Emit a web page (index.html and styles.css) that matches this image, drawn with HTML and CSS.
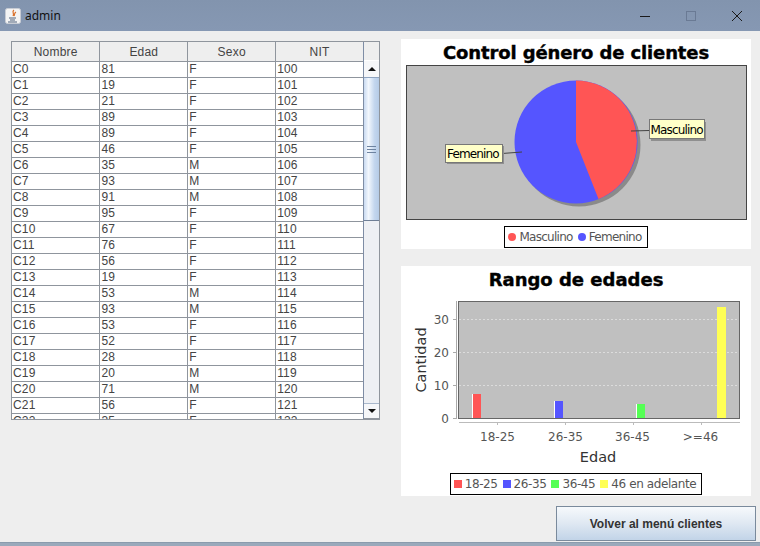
FILE: index.html
```html
<!DOCTYPE html>
<html lang="es">
<head>
    <meta charset="UTF-8">
    <meta name="viewport" content="width=device-width, initial-scale=1.0">
    <title>admin</title>
    <link rel="stylesheet" href="styles.css">
</head>
<body>
    <div class="titlebar">
        <svg class="app-icon" width="16" height="16" viewBox="0 0 16 16">
            <rect x="0.5" y="0.5" width="15" height="15" rx="2" fill="#f4f4f4" stroke="#c8ccd4"/>
            <path d="M9 2c-3 2 1 3-1 6M11 4c-2 1-1 2-2 4" fill="none" stroke="#d9702a" stroke-width="1.2"/>
            <path d="M4 10h7M5 12h5M3 14h9" stroke="#51637c" stroke-width="1"/>
        </svg>
        <span class="title-text">admin</span>
        <div class="win-btns">
            <svg width="12" height="12" viewBox="0 0 12 12"><path d="M1 6.5h10" stroke="#1a1a1a" stroke-width="1"/></svg>
            <svg width="12" height="12" viewBox="0 0 12 12"><rect x="1.5" y="1.5" width="9" height="9" fill="none" stroke="#6a7a94"/></svg>
            <svg width="12" height="12" viewBox="0 0 12 12"><path d="M1 1l10 10M11 1L1 11" stroke="#1a1a1a" stroke-width="1"/></svg>
        </div>
    </div>

    <div class="content">
        <div class="table-pane">
            <div class="table-scroll">
                <table class="data">
                    <thead>
                        <tr><th>Nombre</th><th>Edad</th><th>Sexo</th><th>NIT</th></tr>
                    </thead>
                    <tbody>
                        <tr><td>C0</td><td>81</td><td>F</td><td>100</td></tr>
                        <tr><td>C1</td><td>19</td><td>F</td><td>101</td></tr>
                        <tr><td>C2</td><td>21</td><td>F</td><td>102</td></tr>
                        <tr><td>C3</td><td>89</td><td>F</td><td>103</td></tr>
                        <tr><td>C4</td><td>89</td><td>F</td><td>104</td></tr>
                        <tr><td>C5</td><td>46</td><td>F</td><td>105</td></tr>
                        <tr><td>C6</td><td>35</td><td>M</td><td>106</td></tr>
                        <tr><td>C7</td><td>93</td><td>M</td><td>107</td></tr>
                        <tr><td>C8</td><td>91</td><td>M</td><td>108</td></tr>
                        <tr><td>C9</td><td>95</td><td>F</td><td>109</td></tr>
                        <tr><td>C10</td><td>67</td><td>F</td><td>110</td></tr>
                        <tr><td>C11</td><td>76</td><td>F</td><td>111</td></tr>
                        <tr><td>C12</td><td>56</td><td>F</td><td>112</td></tr>
                        <tr><td>C13</td><td>19</td><td>F</td><td>113</td></tr>
                        <tr><td>C14</td><td>53</td><td>M</td><td>114</td></tr>
                        <tr><td>C15</td><td>93</td><td>M</td><td>115</td></tr>
                        <tr><td>C16</td><td>53</td><td>F</td><td>116</td></tr>
                        <tr><td>C17</td><td>52</td><td>F</td><td>117</td></tr>
                        <tr><td>C18</td><td>28</td><td>F</td><td>118</td></tr>
                        <tr><td>C19</td><td>20</td><td>M</td><td>119</td></tr>
                        <tr><td>C20</td><td>71</td><td>M</td><td>120</td></tr>
                        <tr><td>C21</td><td>56</td><td>F</td><td>121</td></tr>
                        <tr><td>C22</td><td>35</td><td>F</td><td>122</td></tr>
                    </tbody>
                </table>
            </div>
            <div class="scrollbar">
                <div class="corner"></div>
                <div class="arrow-btn"><span class="tri-up"></span></div>
                <div class="track">
                    <div class="thumb"><span class="grip"></span></div>
                </div>
                <div class="arrow-btn arrow-btn-down"><span class="tri-down"></span></div>
            </div>
        </div>

        <div class="right-col">
            <div class="chart chart-pie">
                <h2 class="chart-title">Control género de clientes</h2>
                <svg class="pie-plot" width="341" height="155" viewBox="0 0 341 155">
                    <rect x="0.5" y="0.5" width="340" height="154" fill="#c0c0c0" stroke="#444"/>
                    <circle cx="173" cy="80" r="61.5" fill="#8a8a8a"/>
                    <circle cx="170" cy="77" r="61.5" fill="#5555ff"/>
                    <path d="M170 77V15.500A61.500 61.500 0 0 1 192.500 134Z" fill="#ff5555"/>
                    <path d="M243 65.500L225 66" stroke="#444" fill="none"/>
                    <path d="M96 88.500L116 87" stroke="#444" fill="none"/>
                    <rect x="245" y="57" width="55" height="19" fill="#8f8f8f"/>
                    <rect x="243.500" y="54.500" width="55" height="19" fill="#ffffc8" stroke="#777"/>
                    <text x="244.500" y="69" class="pie-label">Masculino</text>
                    <rect x="41" y="81" width="57" height="18" fill="#8f8f8f"/>
                    <rect x="39.500" y="79.500" width="57" height="18" fill="#ffffc8" stroke="#777"/>
                    <text x="41" y="93" class="pie-label">Femenino</text>
                </svg>
                <div class="legend legend-pie">
                    <span class="legend-item"><i class="dot red"></i>Masculino</span>
                    <span class="legend-item"><i class="dot blue"></i>Femenino</span>
                </div>
            </div>

            <div class="chart chart-bars">
                <h2 class="chart-title">Rango de edades</h2>
                <svg class="bar-plot" width="350" height="173" viewBox="0 0 350 173">
                    <rect x="57.500" y="0.500" width="281" height="117" fill="#c0c0c0" stroke="#666"/>
                    <path d="M58 18.500h280M58 51.500h280M58 84.500h280" stroke="#dcdcdc" stroke-dasharray="2 2"/>
                    <rect x="71" y="93" width="9" height="24" fill="#ff5555"/>
                    <path d="M71.500 93v24" stroke="#fff"/>
                    <rect x="153" y="100" width="9" height="17" fill="#5555ff"/>
                    <path d="M153.500 100v17" stroke="#fff"/>
                    <rect x="235" y="103" width="9" height="14" fill="#55ff55"/>
                    <path d="M235.500 103v14" stroke="#fff"/>
                    <rect x="316" y="6" width="9" height="111" fill="#ffff55"/>
                    <path d="M55.500 0v118M52 117.500h4M52 84.500h4M52 51.500h4M52 18.500h4" stroke="#aaa"/>
                    <path d="M58 121.500h281M96.500 121v3M164.500 121v3M232.500 121v3M300.500 121v3" stroke="#bbb"/>
                    <text class="tick" x="48" y="122" text-anchor="end">0</text>
                    <text class="tick" x="48" y="89" text-anchor="end">10</text>
                    <text class="tick" x="48" y="56" text-anchor="end">20</text>
                    <text class="tick" x="48" y="23" text-anchor="end">30</text>
                    <text class="tick" x="96.500" y="140" text-anchor="middle">18-25</text>
                    <text class="tick" x="164.500" y="140" text-anchor="middle">26-35</text>
                    <text class="tick" x="231.500" y="140" text-anchor="middle">36-45</text>
                    <text class="tick" x="299.500" y="140" text-anchor="middle">&gt;=46</text>
                    <text class="axis-name" x="197" y="161" text-anchor="middle">Edad</text>
                    <text class="axis-name" transform="translate(25 59) rotate(-90)" text-anchor="middle">Cantidad</text>
                </svg>
                <div class="legend">
                    <span class="legend-item"><i class="box red"></i>18-25</span>
                    <span class="legend-item"><i class="box blue"></i>26-35</span>
                    <span class="legend-item"><i class="box green"></i>36-45</span>
                    <span class="legend-item"><i class="box yellow"></i>46 en adelante</span>
                </div>
            </div>

            <div class="actions">
                <button class="back-btn">Volver al menú clientes</button>
            </div>
        </div>
    </div>
    <div class="bottom-edge"></div>
</body>
</html>
```

FILE: styles.css
```css
html, body {
    height: 100%;
}
body {
    margin: 0;
    display: flex;
    flex-direction: column;
    background-color: #eeeeee;
    font-family: "Liberation Sans", Arial, sans-serif;
    overflow: hidden;
}
.titlebar {
    flex: none;
    height: 31px;
    display: flex;
    align-items: center;
    padding-left: 5px;
    background: linear-gradient(to bottom, #8294ae, #8698b3);
}
.app-icon {
    margin-right: 4px;
}
.title-text {
    font-family: "Noto Sans", sans-serif;
    font-size: 12px;
    color: #111;
}
.win-btns {
    margin-left: auto;
    display: flex;
    gap: 34px;
    padding-right: 17px;
}
.content {
    flex: 1;
    display: flex;
    align-items: flex-start;
    padding-left: 11px;
    min-height: 0;
}
.table-pane {
    width: 369px;
    height: 379px;
    margin-top: 10px;
    box-sizing: border-box;
    display: flex;
    border: 1px solid #8f959d;
    background-color: #fff;
}
.table-scroll {
    width: 352px;
    height: 377px;
    overflow: hidden;
}
.data {
    width: 352px;
    table-layout: fixed;
    border-collapse: collapse;
    font-size: 12px;
    letter-spacing: 0.2px;
    color: #444;
}
.data th {
    height: 19px;
    padding: 2px 0 0;
    box-sizing: border-box;
    background-color: #eeeeee;
    border-right: 1px solid #8f959d;
    border-bottom: 1px solid #8f959d;
    font-weight: normal;
    color: #444;
}
.data td {
    height: 16px;
    box-sizing: border-box;
    padding: 0 0 0 1px;
    line-height: 15px;
    border-right: 1px solid #8f959d;
    border-bottom: 1px solid #8f959d;
}
.scrollbar {
    width: 15px;
    display: flex;
    flex-direction: column;
    background-color: #f0f1f3;
    border-left: 1px solid #7e8da5;
}
.corner {
    height: 19px;
    box-sizing: border-box;
    background-color: #eeeeee;
    border-bottom: 1px solid #fff;
}
.arrow-btn {
    height: 16px;
    display: flex;
    align-items: center;
    justify-content: center;
    background-color: #f6f7f9;
}
.arrow-btn-down {
    border-top: 1px solid #a9b8cc;
    border-bottom: 1px solid #8f959d;
    box-sizing: border-box;
}
.tri-up {
    border-left: 4px solid transparent;
    border-right: 4px solid transparent;
    border-bottom: 4px solid #111;
}
.tri-down {
    border-left: 4px solid transparent;
    border-right: 4px solid transparent;
    border-top: 4px solid #111;
}
.track {
    flex: 1;
    background-color: #eef0f4;
}
.thumb {
    height: 144px;
    box-sizing: border-box;
    display: flex;
    align-items: center;
    justify-content: center;
    background: linear-gradient(to right, #c9daf1, #f2f7fd 30%, #c3d6ee 70%, #b5cbe6);
    border-top: 1px solid #8fa4c0;
    border-bottom: 1px solid #6f7f96;
}
.grip {
    width: 9px;
    height: 5px;
    border-top: 1px solid #6d83a0;
    border-bottom: 1px solid #6d83a0;
    background: linear-gradient(#6d83a0, #6d83a0) center / 100% 1px no-repeat;
}
.right-col {
    width: 355px;
    margin-left: 21px;
    display: flex;
    flex-direction: column;
}
.chart {
    width: 350px;
    background-color: #fff;
    display: flex;
    flex-direction: column;
    align-items: center;
}
.chart-pie {
    height: 210px;
    margin-top: 8px;
}
.chart-bars {
    height: 230px;
    margin-top: 17px;
}
.chart-title {
    margin: 0;
    height: 26px;
    line-height: 28px;
    font-family: "DejaVu Sans", sans-serif;
    font-size: 18px;
    font-weight: bold;
    color: #000;
    -webkit-text-stroke: 0.4px #000;
}
.chart-pie .chart-title {
    letter-spacing: -0.12px;
}
.chart-bars .chart-title {
    height: 35px;
}
.pie-plot {
    align-self: flex-start;
    margin-left: 5px;
    display: block;
}
.bar-plot {
    display: block;
}
.pie-label {
    font-family: "DejaVu Sans", sans-serif;
    font-size: 12px;
    fill: #000;
    letter-spacing: -0.85px;
}
.tick {
    font-family: "DejaVu Sans", sans-serif;
    font-size: 12px;
    fill: #555;
}
.axis-name {
    font-family: "DejaVu Sans", sans-serif;
    font-size: 14.5px;
    fill: #333;
}
.legend {
    margin-top: -1px;
    display: flex;
    gap: 5px;
    padding: 2px 5px 2px 3px;
    border: 1px solid #000;
    font-family: "DejaVu Sans", sans-serif;
    font-size: 12px;
    letter-spacing: -0.4px;
    color: #555;
    line-height: 16px;
}
.legend-pie {
    margin-top: 6px;
    letter-spacing: -0.72px;
}
.legend-item {
    display: flex;
    align-items: center;
    gap: 3px;
}
.dot {
    width: 8px;
    height: 8px;
    border-radius: 50%;
}
.box {
    width: 8px;
    height: 8px;
}
.red { background-color: #ff5555; }
.blue { background-color: #5555ff; }
.green { background-color: #55ff55; }
.yellow { background-color: #ffff55; }
.actions {
    margin-top: 10px;
    margin-left: 155px;
}
.back-btn {
    width: 200px;
    height: 35px;
    border: 1px solid #7a8a9c;
    background: linear-gradient(to bottom, #f6f9fc, #dfe8f2 50%, #c2d4e8);
    font-family: "Liberation Sans", Arial, sans-serif;
    font-size: 12px;
    font-weight: bold;
    color: #333;
    padding: 0;
}
.bottom-edge {
    flex: none;
    height: 4px;
    background-color: #9aa9bb;
    border-top: 1px solid #8a9bad;
    box-sizing: border-box;
}
```
